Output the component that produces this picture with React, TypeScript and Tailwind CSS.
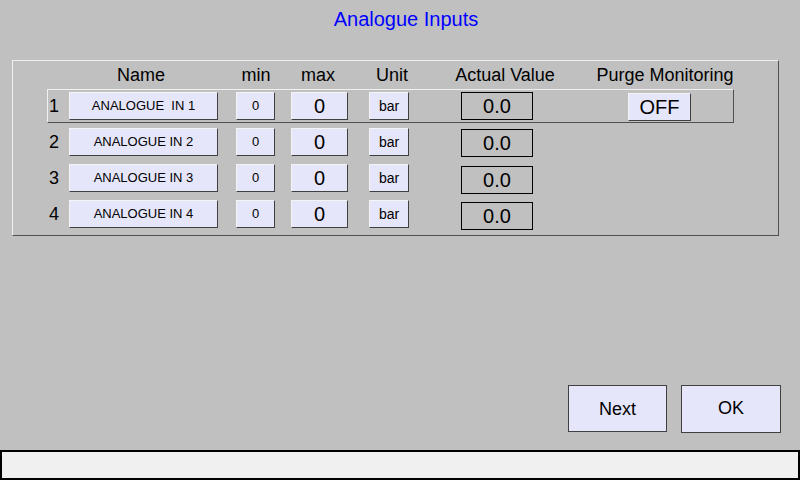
const rows = [
  { n: "1", name: "ANALOGUE  IN 1", active: true },
  { n: "2", name: "ANALOGUE IN 2", active: false },
  { n: "3", name: "ANALOGUE IN 3", active: false },
  { n: "4", name: "ANALOGUE IN 4", active: false },
]

const btn =
  "h-[28px] bg-[#e6e6fa] border border-t-[#f4f4f4] border-l-[#f4f4f4] border-b-[#404040] border-r-[#404040] flex items-center justify-center text-black shrink-0"

export default function App() {
  return (
    <div
      className="w-[800px] h-[480px] bg-[#c0c0c0] flex flex-col overflow-hidden"
      style={{ fontFamily: '"Liberation Sans", Arial, sans-serif' }}
    >
      {/* title */}
      <div className="h-[40px] pl-[12px] flex items-center justify-center text-[20px] text-[#0000ff] leading-none pb-[2px]">
        Analogue Inputs
      </div>

      {/* panel */}
      <div className="ml-[12px] mt-[20px] w-[767px] h-[176px] border border-t-[#f0f0f0] border-l-[#f0f0f0] border-b-[#505050] border-r-[#505050] flex flex-col">
        <div className="h-[28px] flex items-center text-[18px] text-black leading-none">
          <span className="ml-[68px] w-[120px] text-center">Name</span>
          <span className="ml-[35px] w-[40px] text-center">min</span>
          <span className="ml-[22px] w-[40px] text-center">max</span>
          <span className="ml-[24px] w-[60px] text-center">Unit</span>
          <span className="ml-[23px] w-[120px] text-center">Actual Value</span>
          <span className="ml-[25px] w-[150px] text-center">Purge Monitoring</span>
        </div>

        <div className="flex flex-col gap-[2px]">
          {rows.map((r, i) => (
            <div
              key={r.n}
              className={[
                "ml-[34px] w-[687px] h-[34px] flex items-center border",
                r.active
                  ? "border-t-[#f0f0f0] border-l-[#f0f0f0] border-b-[#505050] border-r-[#505050]"
                  : "border-transparent",
              ].join(" ")}
            >
              <span className="w-[21px] text-right pr-[10px] text-[18px] leading-none text-black">{r.n}</span>
              <div className={btn + " w-[149px] text-[13px] whitespace-pre"}>{r.name}</div>
              <div className={btn + " ml-[18px] w-[39px] text-[13px]"}>0</div>
              <div className={btn + " ml-[16px] w-[57px] text-[20px]"}>0</div>
              <div className={btn + " ml-[21px] w-[40px] text-[14px]"}>bar</div>
              <div
                className={[
                  "ml-[52px] w-[72px] h-[28px] border border-black flex items-center justify-center text-[20px] text-black shrink-0",
                  i >= 2 ? "mt-[4px]" : i === 1 ? "mt-[2px]" : "",
                ].join(" ")}
              >
                0.0
              </div>
              {r.active && (
                <div className={btn + " ml-[95px] w-[63px] text-[20px] mt-[2px]"}>OFF</div>
              )}
            </div>
          ))}
        </div>
      </div>

      <div className="flex-1" />

      {/* buttons */}
      <div className="flex justify-end gap-[14px] pr-[19px] mb-[17px]">
        <button className="w-[99px] h-[47px] bg-[#e6e6fa] border border-[#404040] text-[18px] text-black flex items-center justify-center pt-[1px]">
          Next
        </button>
        <button className="w-[100px] h-[48px] bg-[#e6e6fa] border border-[#404040] text-[18px] text-black flex items-center justify-center pb-[2px]">
          OK
        </button>
      </div>

      {/* status bar */}
      <div className="h-[30px] bg-[#f0f0f0] border-2 border-black" />
    </div>
  )
}
